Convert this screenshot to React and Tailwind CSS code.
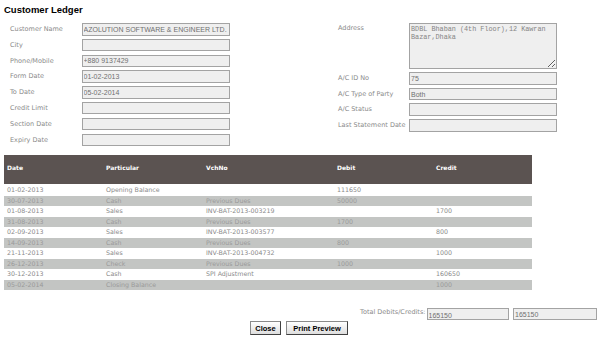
import React from "react";

const leftFields = [
  { label: "Customer Name", value: "AZOLUTION SOFTWARE & ENGINEER LTD." },
  { label: "City", value: "" },
  { label: "Phone/Mobile", value: "+880 9137429" },
  { label: "Form Date", value: "01-02-2013" },
  { label: "To Date", value: "05-02-2014" },
  { label: "Credit Limit", value: "" },
  { label: "Section Date", value: "" },
  { label: "Expiry Date", value: "" },
];

const rightFields = [
  { label: "A/C ID No", value: "75" },
  { label: "A/C Type of Party", value: "Both" },
  { label: "A/C Status", value: "" },
  { label: "Last Statement Date", value: "" },
];

const rows = [
  ["01-02-2013", "Opening Balance", "", "111650", ""],
  ["30-07-2013", "Cash", "Previous Dues", "50000", ""],
  ["01-08-2013", "Sales", "INV-BAT-2013-003219", "", "1700"],
  ["31-08-2013", "Cash", "Previous Dues", "1700", ""],
  ["02-09-2013", "Sales", "INV-BAT-2013-003577", "", "800"],
  ["14-09-2013", "Cash", "Previous Dues", "800", ""],
  ["21-11-2013", "Sales", "INV-BAT-2013-004732", "", "1000"],
  ["26-12-2013", "Check", "Previous Dues", "1000", ""],
  ["30-12-2013", "Cash", "SPI Adjustment", "", "160650"],
  ["05-02-2014", "Closing Balance", "", "", "1000"],
];

const colWidths = ["w-[99px]", "w-[100px]", "w-[131px]", "w-[99px]", "w-[99px]"];

const inputCls =
  "block w-[148px] h-[12.5px] border border-[#a3a3a3] bg-[#efefef] px-[1px] text-[7px] leading-none text-[#707070] font-['Liberation_Sans',sans-serif] outline-none";

const labelCls = "text-[6.5px] leading-none text-[#8a8a8a] font-['DejaVu_Sans',sans-serif]";

const CustomerLedger = () => {
  return (
    <div className="w-[598px] h-[337px] bg-white overflow-hidden antialiased opacity-[0.995]">
      <h1 className="pl-[4px] pt-[5px] h-[15px] text-[9.5px] leading-[10px] font-bold text-black font-['Liberation_Sans',sans-serif]">
        Customer Ledger
      </h1>

      <div className="flex items-start mt-[8px]">
        {/* Left block */}
        <div className="w-[330px] pl-[10px] flex flex-col gap-[3.3px]">
          {leftFields.map((f) => (
            <div key={f.label} className="flex items-center">
              <span className={`${labelCls} w-[71.5px]`}>{f.label}</span>
              <input readOnly value={f.value} className={inputCls} />
            </div>
          ))}
        </div>

        {/* Right block */}
        <div className="pl-[8px] flex flex-col">
          <div className="flex items-start">
            <span className={`${labelCls} w-[71px] pt-[2px]`}>Address</span>
            <textarea
              readOnly
              value={"BDBL Bhaban (4th Floor),12 Kawran\nBazar,Dhaka"}
              className="block w-[148px] h-[46px] border border-[#a3a3a3] bg-[#efefef] px-[1px] py-[1px] text-[6.8px] leading-[8px] text-[#858585] font-['Liberation_Mono',monospace] outline-none"
            />
          </div>
          <div className="flex flex-col gap-[3.1px] mt-[3.3px]">
            {rightFields.map((f) => (
              <div key={f.label} className="flex items-center">
                <span className={`${labelCls} w-[71px]`}>{f.label}</span>
                <input readOnly value={f.value} className={inputCls} />
              </div>
            ))}
          </div>
        </div>
      </div>

      {/* Ledger table */}
      <div className="mx-[4px] mt-[8.5px] w-[528px]">
        <div className="flex items-center h-[29px] pb-[3px] bg-[#5b5351] text-white text-[6px] font-bold font-['DejaVu_Sans',sans-serif]">
          {["Date", "Particular", "VchNo", "Debit", "Credit"].map((h, i) => (
            <div key={h} className={`${colWidths[i]} pl-[3px]`}>
              {h}
            </div>
          ))}
        </div>
        <div className="mt-[2px]">
          {rows.map((r, idx) => (
            <div key={idx} className="h-[10.5px]">
              <div
                className={`flex items-center h-[9.5px] text-[6.3px] leading-none font-['DejaVu_Sans',sans-serif] ${
                  idx % 2 === 1 ? "bg-[#c3c5c3] text-[#9a9a9a]" : "text-[#8a8a8a]"
                }`}
              >
                {r.map((c, i) => (
                  <div key={i} className={`${colWidths[i]} pl-[3px]`}>
                    {c}
                  </div>
                ))}
              </div>
            </div>
          ))}
        </div>
      </div>

      {/* Totals */}
      <div className="flex items-start justify-end pr-[1px] mt-[17px]">
        <span className={`${labelCls} mt-[1.5px] mr-[1px]`}>Total Debits/Credits:</span>
        <input
          readOnly
          value="165150"
          className="block w-[82px] h-[12.7px] border border-[#a3a3a3] bg-[#efefef] px-[1px] pt-[3px] text-[7px] leading-none text-[#707070] font-['Liberation_Sans',sans-serif] outline-none"
        />
        <input
          readOnly
          value="165150"
          className="block ml-[4.5px] w-[84px] h-[12.7px] border border-[#a3a3a3] bg-[#efefef] px-[1px] pt-[2px] text-[7px] leading-none text-[#707070] font-['Liberation_Sans',sans-serif] outline-none"
        />
      </div>

      <div className="flex justify-center gap-[5px] mt-[1px]">
        <button className="w-[31px] h-[14px] border border-[#8a8a8a] border-r-[#404040] border-b-[#404040] bg-linear-to-b from-white to-[#dedede] text-[7.5px] font-bold text-black font-['Liberation_Sans',sans-serif] leading-none">
          Close
        </button>
        <button className="w-[62px] h-[14px] border border-[#8a8a8a] border-r-[#404040] border-b-[#404040] bg-linear-to-b from-white to-[#dedede] text-[7.5px] font-bold text-black font-['Liberation_Sans',sans-serif] leading-none">
          Print Preview
        </button>
      </div>
    </div>
  );
};

export default CustomerLedger;
